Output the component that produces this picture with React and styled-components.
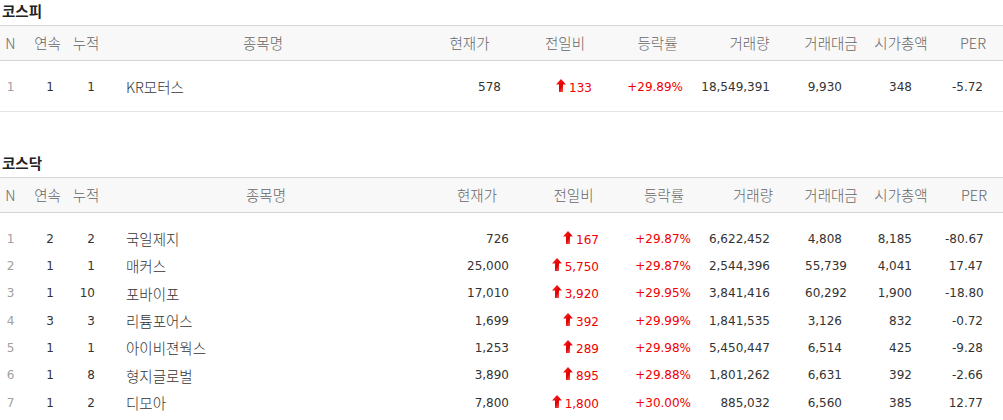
import React from "react";
import styled, { createGlobalStyle } from "styled-components";

const GlobalStyle = createGlobalStyle`
  html, body { margin: 0; padding: 0; background: #fff; }
  body { font-family: "DejaVu Sans", "Noto Sans CJK KR", sans-serif; }
`;

const KR = `"Noto Sans CJK KR", "Noto Sans", sans-serif`;
const NUM = `"DejaVu Sans", "Noto Sans CJK KR", sans-serif`;

const Page = styled.div`
  width: 1003px;
`;

const Section = styled.section`
  & + & { margin-top: 40px; }
`;

const Title = styled.h3`
  margin: 0;
  height: 25px;
  line-height: 22px;
  padding-left: 2px;
  font-family: ${KR};
  font-size: 14.5px;
  font-weight: 700;
  color: #222;
`;

const Row = styled.div`
  display: grid;
  grid-template-columns: ${(p) => p.$cols};
  height: ${(p) => (p.$head ? "34px" : "27.33px")};
  align-items: center;
`;

const Head = styled(Row)`
  border-top: 1px solid #d6d6d6;
  border-bottom: 1px solid #d6d6d6;
  background: #f8f8f8;
`;

const Body = styled.div`
  padding: 12px 0 10.67px;
  border-bottom: ${(p) => (p.$closed ? "1px solid #e3e3e3" : "none")};
`;

const HeadCell = styled.div`
  display: flex;
  justify-content: center;
  white-space: nowrap;
  font-family: ${KR};
  font-size: 14.5px;
  font-weight: 300;
  line-height: 34px;
  color: #666;
`;

const RankCell = styled.div`
  text-align: center;
  font-family: ${NUM};
  font-size: 12px;
  color: #a0a0a0;
`;

const NumCell = styled.div`
  text-align: right;
  padding-right: ${(p) => p.$pad}px;
  white-space: nowrap;
  font-family: ${NUM};
  font-size: 12px;
  color: ${(p) => (p.$red ? "#f00000" : "#333")};
`;

const NameCell = styled.div`
  padding-left: ${(p) => p.$pad}px;
  white-space: nowrap;
  font-family: ${KR};
  font-size: 14.5px;
  font-weight: 300;
  color: #333;
`;

const Arrow = styled.svg`
  width: 10px;
  height: 13px;
  margin-right: 3px;
  vertical-align: baseline;
`;

const UpArrow = () => (
  <Arrow viewBox="0 0 10 13">
    <defs>
      <linearGradient id="upg" x1="0" y1="0" x2="1" y2="1">
        <stop offset="0" stopColor="#ff2a2a" />
        <stop offset="0.55" stopColor="#e00000" />
        <stop offset="1" stopColor="#ff8a8a" />
      </linearGradient>
    </defs>
    <path d="M5 0 L10 5.5 L7 5.5 L7 13 L3 13 L3 5.5 L0 5.5 Z" fill="url(#upg)" />
  </Arrow>
);

const LABELS = ["N", "연속", "누적", "종목명", "현재가", "전일비", "등락률", "거래량", "거래대금", "시가총액", "PER"];

const tables = [
  {
    title: "코스피",
    widths: [21, 53, 24, 330, 83, 108, 77, 107, 56, 84, 60],
    pads: [0, 20, 3, 28, 10, 27, 13, 33, 17, 31, 20],
    closed: true,
    rows: [["1", "1", "1", "KR모터스", "578", "133", "+29.89%", "18,549,391", "9,930", "348", "-5.72"]],
  },
  {
    title: "코스닥",
    widths: [21, 53, 24, 336, 86, 107, 74, 104, 52, 88, 58],
    pads: [0, 20, 3, 28, 11, 28, 10, 35, 15, 33, 20],
    closed: true,
    rows: [
      ["1", "2", "2", "국일제지", "726", "167", "+29.87%", "6,622,452", "4,808", "8,185", "-80.67"],
      ["2", "1", "1", "매커스", "25,000", "5,750", "+29.87%", "2,544,396", "55,739", "4,041", "17.47"],
      ["3", "1", "10", "포바이포", "17,010", "3,920", "+29.95%", "3,841,416", "60,292", "1,900", "-18.80"],
      ["4", "3", "3", "리튬포어스", "1,699", "392", "+29.99%", "1,841,535", "3,126", "832", "-0.72"],
      ["5", "1", "1", "아이비젼웍스", "1,253", "289", "+29.98%", "5,450,447", "6,514", "425", "-9.28"],
      ["6", "1", "8", "형지글로벌", "3,890", "895", "+29.88%", "1,801,262", "6,631", "392", "-2.66"],
      ["7", "1", "2", "디모아", "7,800", "1,800", "+30.00%", "885,032", "6,560", "385", "12.77"],
    ],
  },
];

function StockTable({ title, widths, pads, rows, closed }) {
  const cols = widths.map((w) => `${w}px`).join(" ");
  return (
    <Section>
      <Title>{title}</Title>
      <Head $cols={cols} $head>
        {LABELS.map((l) => (
          <HeadCell key={l}>{l}</HeadCell>
        ))}
      </Head>
      <Body $closed={closed}>
        {rows.map((r) => (
          <Row key={r[0]} $cols={cols}>
            <RankCell>{r[0]}</RankCell>
            <NumCell $pad={pads[1]}>{r[1]}</NumCell>
            <NumCell $pad={pads[2]}>{r[2]}</NumCell>
            <NameCell $pad={pads[3]}>{r[3]}</NameCell>
            <NumCell $pad={pads[4]}>{r[4]}</NumCell>
            <NumCell $pad={pads[5]} $red>
              <UpArrow />
              {r[5]}
            </NumCell>
            <NumCell $pad={pads[6]} $red>{r[6]}</NumCell>
            <NumCell $pad={pads[7]}>{r[7]}</NumCell>
            <NumCell $pad={pads[8]}>{r[8]}</NumCell>
            <NumCell $pad={pads[9]}>{r[9]}</NumCell>
            <NumCell $pad={pads[10]}>{r[10]}</NumCell>
          </Row>
        ))}
      </Body>
    </Section>
  );
}

export default function App() {
  return (
    <Page>
      <GlobalStyle />
      {tables.map((t) => (
        <StockTable key={t.title} {...t} />
      ))}
    </Page>
  );
}
